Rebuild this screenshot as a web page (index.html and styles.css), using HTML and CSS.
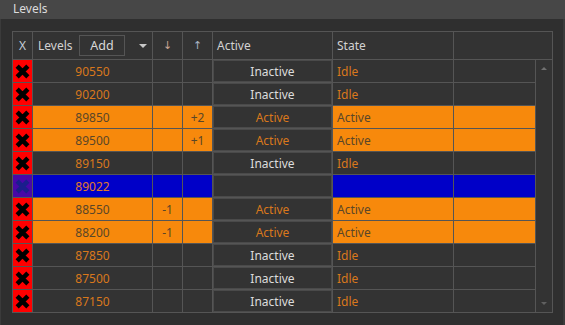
FILE: index.html
```html
<!DOCTYPE html>
<html>
<head>
<meta charset="utf-8">
<link rel="stylesheet" href="styles.css">
</head>
<body>
<div class="title">Levels</div>
<div class="panel">
  <div class="grid">
    <div class="head">
      <div class="c cx hc">X</div>
      <div class="c cl hl"><span class="lbl">Levels</span><span class="add">Add</span><span class="tri"></span></div>
      <div class="c cd hc arrow">↓</div>
      <div class="c cu hc arrow up">↑</div>
      <div class="c ca hl">Active</div>
      <div class="c cs hl">State</div>
      <div class="c cr"></div>
    </div>
    <div class="body">
      <div class="rows">
        <div class="row"><div class="c cx"><svg class="xi" viewBox="0 0 14 14"><path d="M2 2L12 12M12 2L2 12"/></svg></div><div class="c cl num">90550</div><div class="c cd num"></div><div class="c cu num"></div><div class="c ca"><div class="btn">Inactive</div></div><div class="c cs st">Idle</div><div class="c cr"></div></div>
        <div class="row"><div class="c cx"><svg class="xi" viewBox="0 0 14 14"><path d="M2 2L12 12M12 2L2 12"/></svg></div><div class="c cl num">90200</div><div class="c cd num"></div><div class="c cu num"></div><div class="c ca"><div class="btn">Inactive</div></div><div class="c cs st">Idle</div><div class="c cr"></div></div>
        <div class="row on"><div class="c cx"><svg class="xi" viewBox="0 0 14 14"><path d="M2 2L12 12M12 2L2 12"/></svg></div><div class="c cl num">89850</div><div class="c cd num"></div><div class="c cu num">+2</div><div class="c ca"><div class="btn">Active</div></div><div class="c cs st">Active</div><div class="c cr"></div></div>
        <div class="row on"><div class="c cx"><svg class="xi" viewBox="0 0 14 14"><path d="M2 2L12 12M12 2L2 12"/></svg></div><div class="c cl num">89500</div><div class="c cd num"></div><div class="c cu num">+1</div><div class="c ca"><div class="btn">Active</div></div><div class="c cs st">Active</div><div class="c cr"></div></div>
        <div class="row"><div class="c cx"><svg class="xi" viewBox="0 0 14 14"><path d="M2 2L12 12M12 2L2 12"/></svg></div><div class="c cl num">89150</div><div class="c cd num"></div><div class="c cu num"></div><div class="c ca"><div class="btn">Inactive</div></div><div class="c cs st">Idle</div><div class="c cr"></div></div>
        <div class="row sel"><div class="c cx"><svg class="xi" viewBox="0 0 14 14"><path d="M2 2L12 12M12 2L2 12"/></svg></div><div class="c cl num">89022</div><div class="c cd num"></div><div class="c cu num"></div><div class="c ca"><div class="btn"></div></div><div class="c cs st"></div><div class="c cr"></div></div>
        <div class="row on"><div class="c cx"><svg class="xi" viewBox="0 0 14 14"><path d="M2 2L12 12M12 2L2 12"/></svg></div><div class="c cl num">88550</div><div class="c cd num">-1</div><div class="c cu num"></div><div class="c ca"><div class="btn">Active</div></div><div class="c cs st">Active</div><div class="c cr"></div></div>
        <div class="row on"><div class="c cx"><svg class="xi" viewBox="0 0 14 14"><path d="M2 2L12 12M12 2L2 12"/></svg></div><div class="c cl num">88200</div><div class="c cd num">-1</div><div class="c cu num"></div><div class="c ca"><div class="btn">Active</div></div><div class="c cs st">Active</div><div class="c cr"></div></div>
        <div class="row"><div class="c cx"><svg class="xi" viewBox="0 0 14 14"><path d="M2 2L12 12M12 2L2 12"/></svg></div><div class="c cl num">87850</div><div class="c cd num"></div><div class="c cu num"></div><div class="c ca"><div class="btn">Inactive</div></div><div class="c cs st">Idle</div><div class="c cr"></div></div>
        <div class="row"><div class="c cx"><svg class="xi" viewBox="0 0 14 14"><path d="M2 2L12 12M12 2L2 12"/></svg></div><div class="c cl num">87500</div><div class="c cd num"></div><div class="c cu num"></div><div class="c ca"><div class="btn">Inactive</div></div><div class="c cs st">Idle</div><div class="c cr"></div></div>
        <div class="row"><div class="c cx"><svg class="xi" viewBox="0 0 14 14"><path d="M2 2L12 12M12 2L2 12"/></svg></div><div class="c cl num">87150</div><div class="c cd num"></div><div class="c cu num"></div><div class="c ca"><div class="btn">Inactive</div></div><div class="c cs st">Idle</div><div class="c cr"></div></div>
      </div>
      <div class="scroll"><span class="sup"></span><span class="sdn"></span></div>
    </div>
  </div>
</div>
</body>
</html>
```

FILE: styles.css
```css
* { box-sizing: border-box; }
html, body { margin: 0; padding: 0; }
body {
  width: 565px;
  height: 325px;
  overflow: hidden;
  background: #2f2f2f;
  font-family: "Noto Sans", "DejaVu Sans", sans-serif;
  font-size: 12px;
  color: #d6d6d6;
}
.title {
  height: 19px;
  background: #474747;
  color: #dcdcdc;
  padding-left: 13px;
  line-height: 18px;
}
.panel {
  height: 306px;
  padding: 12px 0 0 11px;
  border-left: 1px solid #3b3b3b;
  border-right: 2px solid #3b3b3b;
}
.grid {
  width: 541px;
  background: #333333;
  border: 1px solid #555555;
  border-bottom: none;
}
.head {
  display: flex;
  height: 28px;
  border-bottom: 1px solid #555555;
}
.c {
  flex: none;
  height: 100%;
  border-right: 1px solid #555555;
  display: flex;
  align-items: center;
  white-space: nowrap;
}
.cx { width: 20px; justify-content: center; }
.cl { width: 120px; }
.cd { width: 30px; }
.cu { width: 30px; }
.ca { width: 120px; }
.cs { width: 121px; }
.cr { flex: 1; border-right: none; }
.hc { justify-content: center; color: #c4ccd6; }
.hl { padding-left: 5px; color: #d2d2d2; }
.head .ca, .head .cs { padding-left: 4px; }
.arrow { color: #c8a494; font-family: "DejaVu Sans", sans-serif; font-size: 11px; }
.arrow.up { color: #a8b4c4; }
.lbl { width: 41px; }
.add {
  width: 46px;
  height: 21px;
  border: 1px solid #555555;
  display: flex;
  align-items: center;
  justify-content: center;
  color: #d8d8d8;
  font-size: 12.5px;
}
.tri {
  margin-left: 14px;
  width: 0;
  height: 0;
  border-left: 4px solid transparent;
  border-right: 4px solid transparent;
  border-top: 4px solid #c8c8c8;
}
.body { display: flex; }
.rows { flex: 1; }
.row {
  display: flex;
  height: 23px;
  border-bottom: 1px solid #555555;
}
.row .cx { background: #ff0000; }
.xi { width: 15px; height: 15px; }
.xi path { stroke: #000; stroke-width: 4.2; fill: none; }
.num { justify-content: center; color: #d9781c; }
.ca { padding: 1px; background: #4a4a4a; }
.head .ca { background: transparent; }
.btn {
  width: 100%;
  height: 100%;
  background: #333333;
  display: flex;
  align-items: center;
  justify-content: center;
  color: #dcdcdc;
}
.st { padding-left: 4px; color: #d9781c; }
.row.on .cl, .row.on .cd, .row.on .cu, .row.on .cs, .row.on .cr { background: #f7890c; color: #5a4628; }
.row.on .btn { color: #d9781c; }
.row.sel .cx { background: #4808a8; }
.row.sel .xi path { stroke: #1a1e8c; }
.row.sel .cl, .row.sel .cd, .row.sel .cu, .row.sel .cs, .row.sel .cr { background: #0000c8; }
.row.sel .cl { color: #e07a28; }
.scroll {
  width: 17px;
  border-left: 1px solid #555555;
  border-bottom: 1px solid #555555;
  position: relative;
  height: 253px;
}
.sup, .sdn {
  position: absolute;
  left: 5px;
  width: 0;
  height: 0;
  border-left: 3px solid transparent;
  border-right: 3px solid transparent;
}
.sup { top: 7px; border-bottom: 3px solid #707070; }
.sdn { bottom: 7px; border-top: 3px solid #606060; }
```
